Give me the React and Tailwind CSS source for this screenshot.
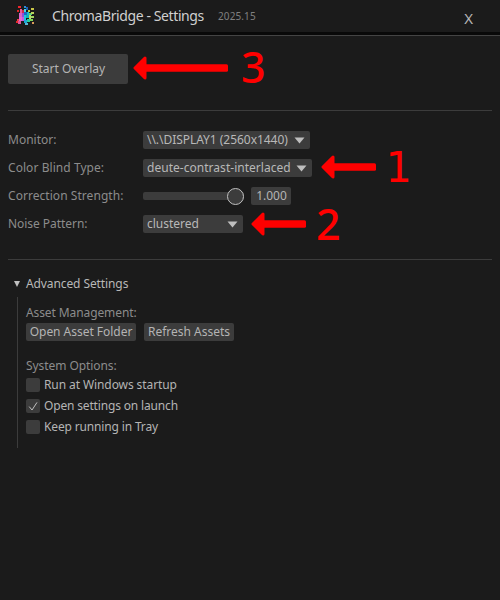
import React from "react";

// [x, y, width, height, colour]
const LOGO = [
  [2, 0, 3, 2, "#f0252c"], [8, 0, 2, 2, "#2f8fd8"], [10, 1, 2, 3, "#1760b8"], [15, 2, 3, 2, "#c9c548"],
  [1, 4, 2, 2, "#d92525"], [4, 3, 2, 4, "#e85a9c"], [8, 3, 2, 3, "#43d7e0"], [6, 4, 2, 3, "#d02a4c"],
  [12, 4, 2, 2, "#bfc84c"], [3, 7, 3, 4, "#df62c4"], [6, 7, 2, 4, "#8a52d8"], [8, 6, 3, 3, "#1666c8"],
  [11, 6, 2, 3, "#18b8c8"], [13, 7, 3, 2, "#59cf79"], [15, 6, 3, 2, "#b9d45a"], [8, 9, 2, 5, "#20c4dc"],
  [10, 9, 3, 3, "#0eb4b8"], [13, 9, 2, 4, "#b9dc70"], [15, 10, 3, 2, "#a0d860"], [3, 11, 3, 4, "#e56bd0"],
  [6, 11, 2, 4, "#c45be0"], [1, 13, 2, 2, "#ee3b42"], [0, 15, 2, 2, "#e52a2a"], [2, 15, 3, 3, "#df539c"],
  [8, 14, 3, 3, "#1da3d6"], [11, 13, 3, 3, "#25cf9c"], [14, 13, 3, 2, "#7bd25a"], [9, 17, 3, 2, "#56b8d8"],
  [16, 16, 2, 2, "#d99a58"],
];

function Logo() {
  return (
    <svg className="h-5 w-5 shrink-0" viewBox="0 0 20 20" shapeRendering="crispEdges">
      {LOGO.map(([x, y, w, h, c], i) => <rect key={i} x={x} y={y} width={w} height={h} fill={c} />)}
    </svg>
  );
}

function Caret() {
  return <svg className="h-[7px] w-[11px] shrink-0" viewBox="0 0 11 7"><path d="M.5 .4h10L5.5 6.6z" fill="#bebebe" /></svg>;
}

function Select({ children, className }) {
  return (
    <button className={`flex h-[18px] items-center justify-between rounded-[2px] bg-[#3c3c3c] pl-1 pr-[5px] text-[#b8b8b8] ${className}`}>
      <span>{children}</span><Caret />
    </button>
  );
}

function Row({ label, spacing = "", children }) {
  return (
    <div className="flex h-[18px] items-center">
      <span className={`w-[135px] text-[#8c8c8c] ${spacing}`}>{label}</span>
      {children}
    </div>
  );
}

function Check({ children, checked, spacing }) {
  return (
    <label className="flex h-[21px] items-center gap-1 text-[#b4b4b4]">
      <span className="flex h-3.5 w-3.5 items-center justify-center rounded-[2px] bg-[#3c3c3c]">
        {checked && <svg className="h-3.5 w-3.5" viewBox="0 0 14 14" fill="none" stroke="#c0c0c0"><path d="M3.2 7.6 6 11 11 3.4" /></svg>}
      </span>
      <span className={spacing}>{children}</span>
    </label>
  );
}

function Arrow({ length, className }) {
  return (
    <svg className={`absolute ${className}`} width={length} height="24" viewBox={`0 0 ${length} 24`} fill="#f00">
      <path d="M2 12 12 2v20z" stroke="#f00" strokeWidth="3" strokeLinejoin="round" />
      <rect x="9" y="8.2" width={length - 9} height="7.5" rx="1.5" />
    </svg>
  );
}

export default function App() {
  return (
    <div className="relative h-[600px] w-[500px] overflow-hidden whitespace-nowrap bg-[#1b1b1b] font-['Noto_Sans',sans-serif] text-[12px] leading-[18px]">
      <header className="flex h-8 items-center pl-4 pr-[27px]">
        <Logo />
        <span className="ml-4 w-[166px] text-[14px] tracking-[-0.4px] text-[#d0d0d0]">ChromaBridge - Settings</span>
        <span className="text-[10px] tracking-[0.1px] text-[#808080]">2025.15</span>
        <button className="ml-auto mt-[3px] text-[15px] text-[#b4b4b4]">X</button>
      </header>
      <div className="h-1 border-b border-[#444] bg-[#090909]" />
      <main className="px-2">
        <button className="mt-[18px] flex h-[30px] w-[120px] items-center justify-center rounded-[2px] bg-[#3c3c3c] pl-px text-[#b4b4b4]">Start Overlay</button>
        <hr className="mt-[26px] border-[#3c3c3c]" />
        <section className="mt-5 flex flex-col gap-2.5">
          <Row label="Monitor:"><Select className="w-[167px] tracking-[-0.04px]">{"\\\\.\\DISPLAY1 (2560x1440)"}</Select></Row>
          <Row label="Color Blind Type:" spacing="tracking-[0.06px]"><Select className="w-[169px] tracking-[0.03px]">deute-contrast-interlaced</Select></Row>
          <Row label="Correction Strength:" spacing="tracking-[0.05px]">
            <div className="flex h-2 w-[101px] items-center justify-end rounded-[2px] bg-[#3c3c3c]">
              <span className="h-[17px] w-[17px] shrink-0 rounded-full border border-[#c0c0c0] bg-[#3c3c3c]" />
            </div>
            <span className="ml-[7px] flex h-[18px] w-10 items-center justify-center rounded-[2px] bg-[#3c3c3c] pl-px text-[#b4b4b4]">1.000</span>
          </Row>
          <Row label="Noise Pattern:" spacing="tracking-[-0.05px]"><Select className="w-[100px]">clustered</Select></Row>
        </section>
        <hr className="mt-[26px] border-[#3c3c3c]" />
        <section>
          <h2 className="mt-[15px] flex items-center gap-1.5 pl-1.5 tracking-[-0.1px] text-[#b8b8b8]">
            <svg className="h-1.5 w-1.5" viewBox="0 0 6 6"><path d="M0 0h6L3 6z" fill="#c0c0c0" /></svg>Advanced Settings
          </h2>
          <div className="ml-[9px] mt-1 h-[151px] border-l border-[#3c3c3c] pl-2 pt-[7px]">
            <p className="tracking-[-0.1px] text-[#8c8c8c]">Asset Management:</p>
            <div className="mt-[1px] flex gap-2 text-[#b4b4b4]">
              <button className="h-[18px] w-[110px] rounded-[2px] bg-[#3c3c3c] tracking-[-0.03px]">Open Asset Folder</button>
              <button className="h-[18px] w-[90px] rounded-[2px] bg-[#3c3c3c]">Refresh Assets</button>
            </div>
            <p className="-mb-px mt-4 tracking-[-0.07px] text-[#8c8c8c]">System Options:</p>
            <Check spacing="tracking-[-0.09px]">Run at Windows startup</Check>
            <Check checked spacing="tracking-[-0.16px]">Open settings on launch</Check>
            <Check spacing="tracking-[-0.15px]">Keep running in Tray</Check>
          </div>
        </section>
      </main>
      <div className="font-['Noto_Sans',sans-serif] text-[43px] font-medium leading-[43px] text-[#f00]">
        <Arrow length={95} className="left-[133px] top-[56px]" />
        <Arrow length={55} className="left-[321px] top-[155px]" />
        <Arrow length={55} className="left-[251px] top-[212px]" />
        <span className="absolute left-[241px] top-[45px]">3</span>
        <span className="absolute left-[385px] top-[146px] font-['DejaVu_Sans_Mono',monospace]">1</span>
        <span className="absolute left-[316px] top-[202px]">2</span>
      </div>
    </div>
  );
}
